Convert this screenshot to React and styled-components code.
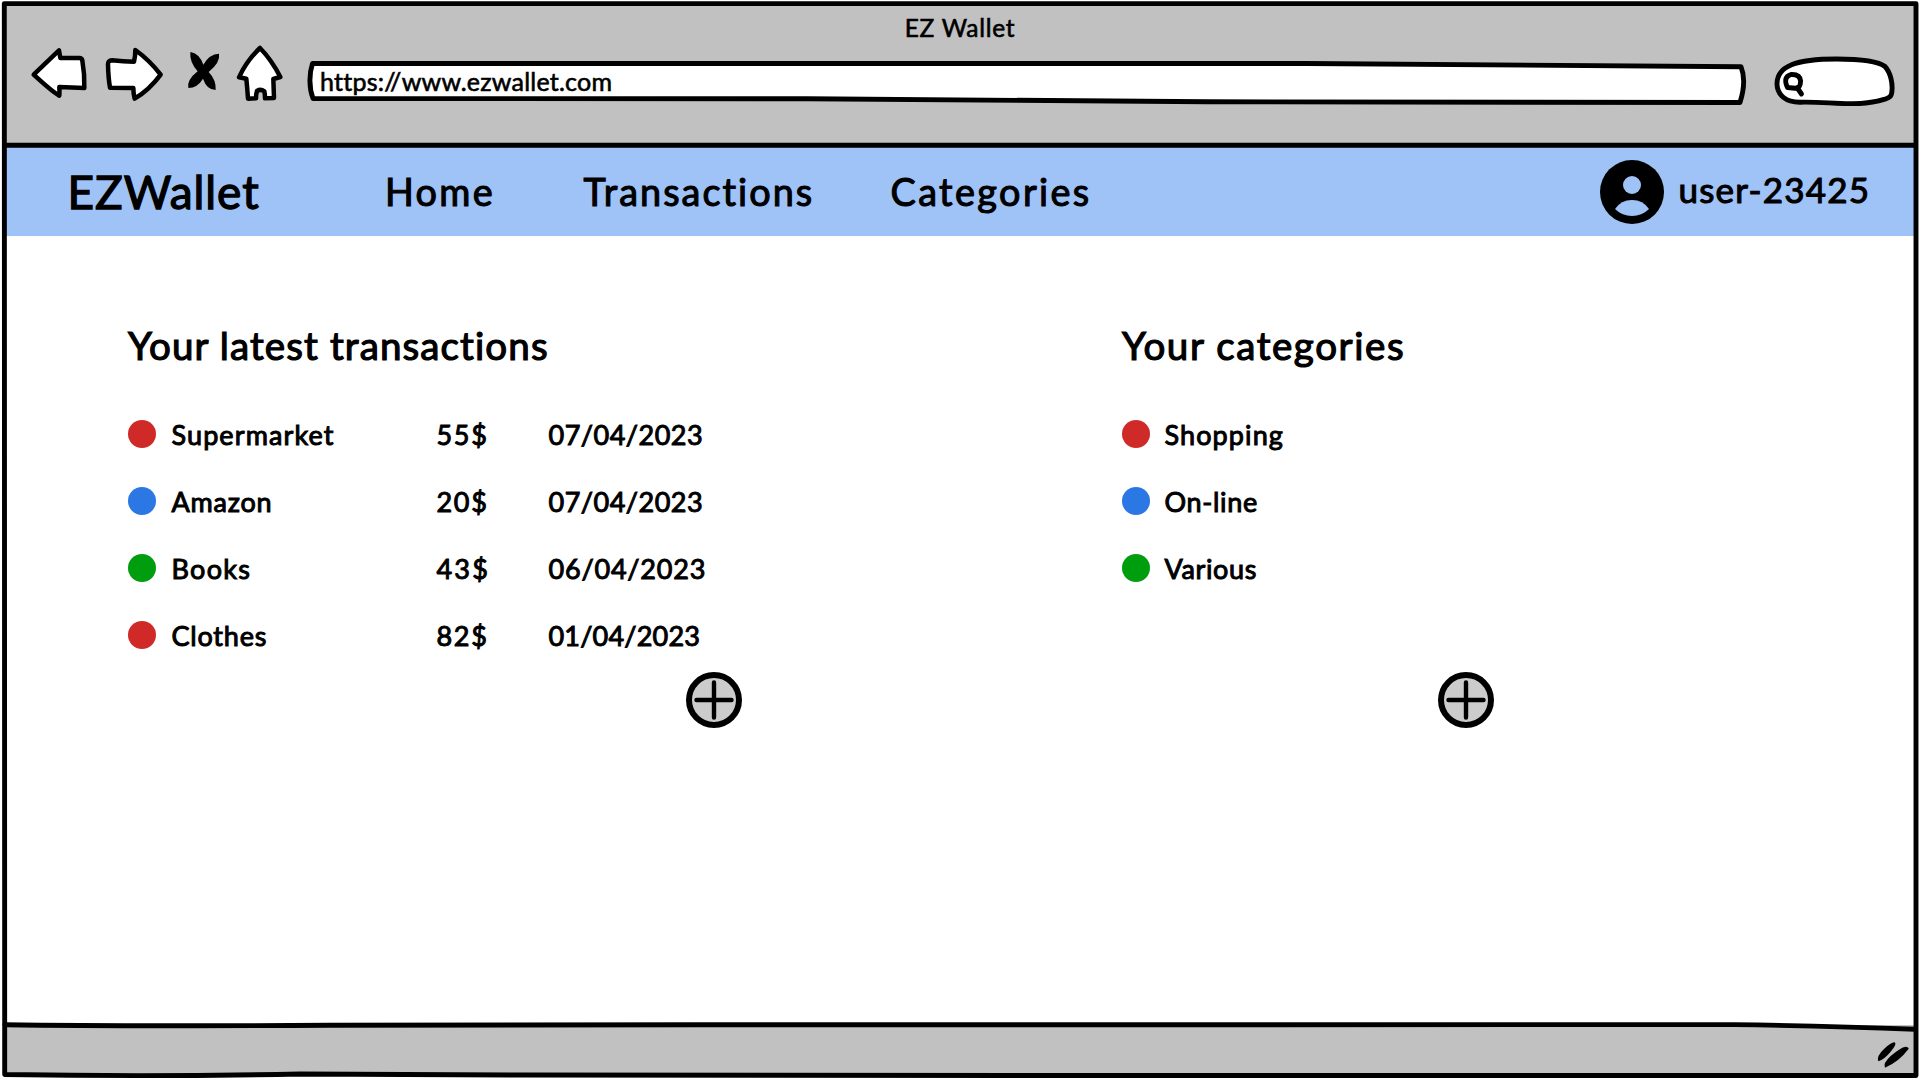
import React from 'react';
import styled, { createGlobalStyle } from 'styled-components';

const GlobalStyle = createGlobalStyle`
  * { box-sizing: border-box; }
  html, body { margin: 0; padding: 0; background: #fff; overflow: hidden; }
  body { font-family: Lato, "Open Sans", sans-serif; color: #000; }
`;

const Ink = styled.span`
  display: block;
  white-space: pre;
  font-size: ${(p) => p.$size}px;
  line-height: ${(p) => p.$line}px;
  letter-spacing: ${(p) => p.$spacing || 0}px;
  -webkit-text-stroke: ${(p) => p.$stroke || 1}px #000;
  stroke-linejoin: round;
`;

const Window = styled.div`
  position: relative;
  display: flex;
  flex-direction: column;
  width: 1920px;
  height: 1080px;
  padding: 3px 4px 4px 4px;
  overflow: hidden;
`;

const Outline = styled.svg`
  position: absolute;
  inset: 0;
  width: 100%;
  height: 100%;
  fill: none;
  stroke: #000;
  stroke-width: 4.9;
  stroke-linejoin: round;
  stroke-linecap: round;
  pointer-events: none;
`;

const Chrome = styled.header`
  display: flex;
  flex-direction: column;
  height: 143px;
  padding-top: 6px;
  background: #c1c1c1;
`;

const TitleBar = styled.div`
  display: flex;
  justify-content: center;
  height: 36px;
`;

const Toolbar = styled.div`
  display: flex;
  align-items: flex-start;
  padding-left: 26px;
`;

const ToolIcon = styled.svg`
  flex: none;
  width: ${(p) => p.$width}px;
  height: 57px;
  margin-right: ${(p) => p.$gap}px;
  fill: ${(p) => (p.$solid ? '#000' : '#fff')};
  stroke: ${(p) => (p.$solid ? 'none' : '#000')};
  stroke-width: 13.5;
  stroke-linejoin: round;
`;

const Field = styled.div`
  position: relative;
  flex: none;
  width: ${(p) => p.$width}px;
  height: ${(p) => p.$height}px;
  margin-top: ${(p) => p.$top}px;
  margin-right: ${(p) => p.$gap || 0}px;
  padding-left: 13px;
`;

const FieldShape = styled.svg`
  position: absolute;
  inset: 0;
  width: 100%;
  height: 100%;
  fill: #fff;
  stroke: #000;
  stroke-width: 4.9;
  stroke-linejoin: round;
  stroke-linecap: round;
`;

const FieldText = styled.div`
  position: relative;
`;

const Nav = styled.nav`
  display: grid;
  grid-template-columns: 317.5px 198.5px 307px 709px auto;
  align-items: start;
  justify-items: start;
  height: 90px;
  padding: 2px 0 0 63.5px;
  background: #9fc3f7;
`;

const User = styled.div`
  display: flex;
  align-items: flex-start;
  gap: 15px;
`;

const Avatar = styled.svg`
  flex: none;
  width: 64px;
  height: 64px;
  margin-top: 12px;
`;

const Main = styled.main`
  display: flex;
  flex: 1;
  padding: 83.5px 0 0 124px;
`;

const Section = styled.section`
  width: ${(p) => p.$width}px;
`;

const Heading = styled.h2`
  margin: 0 0 31px;
  font-weight: 400;
`;

const List = styled.ul`
  height: 268px;
  margin: 0;
  padding: 0;
  list-style: none;
`;

const Row = styled.li`
  display: grid;
  grid-template-columns: ${(p) => p.$indent}px ${(p) => 308.5 - p.$indent}px 112px auto;
  align-items: center;
  height: 67px;
`;

const Cell = styled.div`
  padding-top: 2px;
`;

const Dot = styled.span`
  width: 28px;
  height: 28px;
  border-radius: 50%;
  background: ${(p) => p.$color};
`;

const AddButton = styled.button`
  display: block;
  width: 56px;
  height: 56px;
  margin: 3.5px 0 0 ${(p) => p.$indent}px;
  padding: 0;
  border: 6px solid #000;
  border-radius: 50%;
  background: #ccc;
`;

const PlusMark = styled.svg`
  display: block;
  width: 44px;
  height: 44px;
  stroke: #000;
  stroke-width: 4.4;
  stroke-linecap: round;
`;

const Footer = styled.footer`
  display: flex;
  justify-content: flex-end;
  height: 51px;
  padding: 15px 5.5px 0 0;
  background: #c1c1c1;
`;

const Grip = styled.svg`
  width: 35px;
  height: 30px;
`;

const RED = '#cf2a27';
const BLUE = '#2b78e4';
const GREEN = '#009e0f';

const links = [
  { text: 'Home', spacing: 2.3 },
  { text: 'Transactions', spacing: 2.04 },
  { text: 'Categories', spacing: 2.4 },
];

const transactions = [
  { color: RED, cells: [['Supermarket', 1.1], ['55$', 1.7], ['07/04/2023', 0.5]] },
  { color: BLUE, cells: [['Amazon', 0.8], ['20$', 1.7], ['07/04/2023', 0.5]] },
  { color: GREEN, cells: [['Books', 1.3], ['43$', 2.2], ['06/04/2023', 0.8]] },
  { color: RED, cells: [['Clothes', 0.8], ['82$', 1.7], ['01/04/2023', 0.2]] },
];

const categories = [
  { color: RED, cells: [['Shopping', 1.1]] },
  { color: BLUE, cells: [['On-line', 0.7]] },
  { color: GREEN, cells: [['Various', 0.63]] },
];

function Entries({ items, indent }) {
  return (
    <List>
      {items.map((item) => (
        <Row key={item.cells[0][0]} $indent={indent}>
          <Dot $color={item.color} />
          {item.cells.map(([text, spacing]) => (
            <Cell key={text}>
              <Ink $size={27} $line={34} $spacing={spacing}>{text}</Ink>
            </Cell>
          ))}
        </Row>
      ))}
    </List>
  );
}

function Add({ indent, label }) {
  return (
    <AddButton $indent={indent} aria-label={label}>
      <PlusMark viewBox="0 0 44 44"><path d="M22 4.5V39.5M4.5 22H39.5" /></PlusMark>
    </AddButton>
  );
}

export default function App() {
  return (
    <Window>
      <GlobalStyle />
      <Chrome>
        <TitleBar>
          <Ink $size={24.5} $line={38} $spacing={0.7} $stroke={0.6}>EZ Wallet</Ink>
        </TitleBar>
        <Toolbar>
          <ToolIcon $width={58} $gap={16} viewBox="30 45 174 171">
            <path d="M41 134L117 61Q119 72 121 84L178 84Q186 84 187 92Q194 130 193 174L118 171Q119 185 118 197Q100 188 41 134Z" />
          </ToolIcon>
          <ToolIcon $width={61} $gap={21} viewBox="252 45 183 171">
            <path d="M264 104Q263 91 276 91Q310 95 342 95Q346 78 346 60Q388 90 422 134Q388 180 344 206Q340 190 340 174L270 173Q265 145 264 104Z" />
          </ToolIcon>
          <ToolIcon $solid $width={35} $gap={14} viewBox="498 45 105 171">
            <path d="M511 66Q538 70 550 104Q568 72 597 71Q602 96 566 126Q589 150 587 180Q560 179 549 146Q533 173 505 174Q500 150 533 124Q508 96 511 66Z" />
          </ToolIcon>
          <ToolIcon $width={49} $gap={23} viewBox="645 45 147 171">
            <path d="M720 54Q755 90 781 141L760 147L762 204L735 205Q735 192 733 184Q722 176 711 183Q708 192 708 205L684 206Q682 175 679 146L657 142Q680 92 720 54Z" />
          </ToolIcon>
          <Field $width={1440} $height={46} $top={15} $gap={27}>
            <FieldShape viewBox="0 0 1440 46">
              <path d="M5.5 3.5L1000 3.5L1434 6.7C1438.5 18 1437 30 1433 42.5L900 41.8L500 38.7L6 38.5C2 28 2 14 5.5 3.5Z" />
            </FieldShape>
            <FieldText>
              <Ink $size={25} $line={42} $spacing={0.23} $stroke={0.6}>https://www.ezwallet.com</Ink>
            </FieldText>
          </Field>
          <Field $width={121} $height={50} $top={11}>
            <FieldShape viewBox="0 0 121 50">
              <path d="M26.5 46.2C12 46.5 3.2 39 3 28C3 10 22 3 62.5 3C85 3 104 5 111 10.5C117 17 118.5 28 118 34C117.8 40.5 116 41.5 111 43.2C100 46.5 92 48 76 47.7C58 47.5 45 45.8 26.5 46.2Z" />
              <path d="M13.5 31.5Q8.5 21 17 18.5Q26 18 26.6 25Q26.5 33 21 32.2ZM23 31.5L27.5 38" />
            </FieldShape>
          </Field>
        </Toolbar>
      </Chrome>
      <Nav>
        <Ink $size={46} $line={88.4} $spacing={0.95} $stroke={1.3}>EZWallet</Ink>
        {links.map((link) => (
          <Ink key={link.text} $size={37.8} $line={87.2} $spacing={link.spacing} $stroke={1.1}>{link.text}</Ink>
        ))}
        <User>
          <Avatar viewBox="0 0 64 64">
            <circle cx="32" cy="32" r="32" />
            <g fill="#9fc3f7">
              <circle cx="32" cy="25" r="9" />
              <path d="M15 49Q21 40 32 40Q43 40 49 49Q42 56 32 56Q22 56 15 49Z" />
            </g>
          </Avatar>
          <Ink $size={35} $line={83.6} $spacing={1.2} $stroke={1.1}>user-23425</Ink>
        </User>
      </Nav>
      <Main>
        <Section $width={994}>
          <Heading><Ink $size={38.5} $line={50} $spacing={1.12} $stroke={1.2}>Your latest transactions</Ink></Heading>
          <Entries items={transactions} indent={43.5} />
          <Add indent={558} label="Add transaction" />
        </Section>
        <Section $width={780}>
          <Heading><Ink $size={38.5} $line={50} $spacing={1.6} $stroke={1.2}>Your categories</Ink></Heading>
          <Entries items={categories} indent={42.5} />
          <Add indent={316} label="Add category" />
        </Section>
      </Main>
      <Footer>
        <Grip viewBox="826 120 105 90">
          <path d="M833 184Q827 168 850 147Q872 126 882 127Q890 132 870 155Q852 177 833 184Z" />
          <path d="M853 203Q846 190 870 168Q900 142 915 140Q929 142 921 150Q895 185 853 203Z" />
        </Grip>
      </Footer>
      <Outline viewBox="0 0 1920 1080">
        <path d="M4.3 3.6L1916 3.6Q1915 500 1916 1075.5L1100 1075.5L520 1075L300 1074Q150 1077 4.7 1074.5Q3 600 4.3 3.6Z" />
        <path d="M6 145.3L1915 145.3" />
        <path d="M5 1024.8Q120 1026.5 330 1025.3L700 1024.8L1734 1024.6Q1830 1026 1915 1029.3" />
      </Outline>
    </Window>
  );
}
